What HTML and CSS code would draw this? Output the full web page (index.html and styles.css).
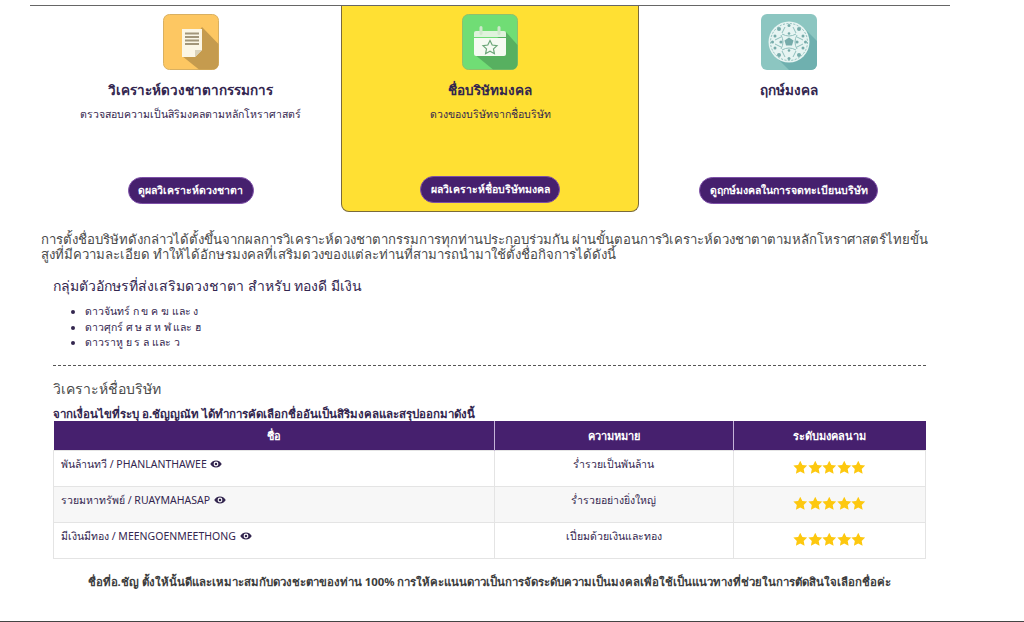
FILE: index.html
```html
<!DOCTYPE html>
<html lang="th">
<head>
    <meta charset="UTF-8">
    <meta name="viewport" content="width=device-width, initial-scale=1.0">
    <title>ชื่อบริษัทมงคล</title>
    <link rel="stylesheet" href="styles.css">
</head>
<body>
    <svg class="defs" width="0" height="0">
        <symbol id="star" viewBox="0 0 24 24">
            <path d="M12 .8l3.500 7 7.900 1-5.700 5.500 1.500 8L12 18.500l-7.200 3.800 1.500-8L.6 8.800l7.900-1z"/>
        </symbol>
        <symbol id="eye" viewBox="0 0 24 16">
            <path fill-rule="evenodd" d="M12 1C6.500 1 2.500 4.500.5 8c2 3.500 6 7 11.500 7s9.500-3.500 11.500-7C21.500 4.500 17.500 1 12 1zm0 2.200a4.800 4.800 0 1 1 0 9.600 4.800 4.800 0 0 1 0-9.600zM12 5.500a2.500 2.500 0 1 0 0 5 2.500 2.500 0 0 0 0-5z"/>
        </symbol>
    </svg>

    <div class="wrap">
        <div class="cards">
            <div class="card">
                <svg class="icon" viewBox="0 0 56 56">
                    <rect x=".5" y=".5" width="55" height="55" rx="6" fill="#fdc762" stroke="#d9b061"/>
                    <path d="M39 13l16.500 17v20a5.500 5.500 0 0 1-5.500 5.500H36L19 42z" fill="#c59b4e"/>
                    <path d="M19 15h20v21l-7 7H19z" fill="#fbf6e6"/>
                    <path d="M32 43v-7h7z" fill="#d9d2bb"/>
                    <path d="M22 19.500h14M22 23h14M22 26.500h14M22 30h14" stroke="#a2967a" stroke-width="2"/>
                </svg>
                <h3>วิเคราะห์ดวงชาตากรรมการ</h3>
                <p>ตรวจสอบความเป็นสิริมงคลตามหลักโหราศาสตร์</p>
                <a href="#" class="btn">ดูผลวิเคราะห์ดวงชาตา</a>
            </div>
            <div class="card active">
                <svg class="icon" viewBox="0 0 56 56">
                    <rect x=".5" y=".5" width="55" height="55" rx="6" fill="#70dd75" stroke="#8fc06c"/>
                    <path d="M44 18l11.500 13v19a5.500 5.500 0 0 1-5.500 5.500H31L12 40z" fill="#57b060"/>
                    <path d="M12 19a2 2 0 0 1 2-2h28a2 2 0 0 1 2 2v4H12z" fill="#dff3dc"/>
                    <path d="M12 24h32v16a2 2 0 0 1-2 2H14a2 2 0 0 1-2-2z" fill="#f5faf2"/>
                    <path d="M19 13.500v6M37 13.500v6" stroke="#cfe8cc" stroke-width="3" stroke-linecap="round"/>
                    <path d="M28 26.500l2.200 4.500 4.800.6-3.500 3.300.9 4.800-4.400-2.400-4.400 2.400.9-4.800-3.500-3.300 4.800-.6z" fill="none" stroke="#6aa577" stroke-width="1.200"/>
                </svg>
                <h3>ชื่อบริษัทมงคล</h3>
                <p>ดวงของบริษัทจากชื่อบริษัท</p>
                <a href="#" class="btn">ผลวิเคราะห์ชื่อบริษัทมงคล</a>
            </div>
            <div class="card">
                <svg class="icon" viewBox="0 0 56 56">
                    <rect width="56" height="56" rx="6" fill="#8cc6c1"/>
                    <path d="M42 13l14 14v23a6 6 0 0 1-6 6H28L14 42z" fill="#6fb0af"/>
                    <circle cx="28" cy="28" r="20.500" fill="#e6f4f2"/>
                    <g fill="#76abaa">
                        <circle cx="28" cy="11.500" r="1.500"/><circle cx="28" cy="44.500" r="1.500"/>
                        <circle cx="11.500" cy="28" r="1.500"/><circle cx="44.500" cy="28" r="1.500"/>
                        <circle cx="18" cy="15" r="2"/><circle cx="38" cy="15" r="2"/>
                        <circle cx="18" cy="41" r="2"/><circle cx="38" cy="41" r="2"/>
                        <circle cx="14" cy="22" r="1.500"/><circle cx="42" cy="22" r="1.500"/>
                        <circle cx="14" cy="34" r="1.500"/><circle cx="42" cy="34" r="1.500"/>
                        <circle cx="20" cy="28" r="1.600"/><circle cx="36" cy="28" r="1.600"/>
                        <circle cx="28" cy="19.500" r="1.300"/><circle cx="28" cy="36.500" r="1.300"/>
                        <path d="M28 23.500l4.500 3-1.500 5h-6l-1.500-5z"/>
                    </g>
                    <g fill="none" stroke="#8fbfbc" stroke-width="1">
                        <circle cx="28" cy="28" r="18.500" stroke-dasharray="2 1.500"/>
                        <path d="M24 13l-3 6M32 13l3 6M14 26l6-3M42 26l-6-3M14 30l6 3M42 30l-6 3M24 43l-3-6M32 43l3-6"/>
                        <path d="M21 20q7 4 14 0M21 36q7-4 14 0M20 21q4 7 0 14M36 21q-4 7 0 14"/>
                    </g>
                </svg>
                <h3>ฤกษ์มงคล</h3>
                <p></p>
                <a href="#" class="btn">ดูฤกษ์มงคลในการจดทะเบียนบริษัท</a>
            </div>
        </div>

        <div class="article">
            <p class="intro">การตั้งชื่อบริษัทดังกล่าวได้ตั้งขึ้นจากผลการวิเคราะห์ดวงชาตากรรมการทุกท่านประกอบร่วมกัน ผ่านขั้นตอนการวิเคราะห์ดวงชาตาตามหลักโหราศาสตร์ไทยขั้นสูงที่มีความละเอียด ทำให้ได้อักษรมงคลที่เสริมดวงของแต่ละท่านที่สามารถนำมาใช้ตั้งชื่อกิจการได้ดังนี้</p>
            <div class="section">
                <h4>กลุ่มตัวอักษรที่ส่งเสริมดวงชาตา สำหรับ ทองดี มีเงิน</h4>
                <ul>
                    <li>ดาวจันทร์ ก ข ค ฆ และ ง</li>
                    <li>ดาวศุกร์ ศ ษ ส ห ฬ และ ฮ</li>
                    <li>ดาวราหู ย ร ล และ ว</li>
                </ul>
                <hr>
                <h4 class="light">วิเคราะห์ชื่อบริษัท</h4>
                <p class="lead">จากเงื่อนไขที่ระบุ อ.ชัญญณัท ได้ทำการคัดเลือกชื่ออันเป็นสิริมงคลและสรุปออกมาดังนี้</p>
                <table>
                    <thead>
                        <tr>
                            <th class="col-name">ชื่อ</th>
                            <th class="col-mean">ความหมาย</th>
                            <th>ระดับมงคลนาม</th>
                        </tr>
                    </thead>
                    <tbody>
                        <tr>
                            <td>พันล้านทวี / PHANLANTHAWEE <svg class="eye"><use href="#eye"/></svg></td>
                            <td class="center">ร่ำรวยเป็นพันล้าน</td>
                            <td class="center"><span class="stars"><svg><use href="#star"/></svg><svg><use href="#star"/></svg><svg><use href="#star"/></svg><svg><use href="#star"/></svg><svg><use href="#star"/></svg></span></td>
                        </tr>
                        <tr>
                            <td>รวยมหาทรัพย์ / RUAYMAHASAP <svg class="eye"><use href="#eye"/></svg></td>
                            <td class="center">ร่ำรวยอย่างยิ่งใหญ่</td>
                            <td class="center"><span class="stars"><svg><use href="#star"/></svg><svg><use href="#star"/></svg><svg><use href="#star"/></svg><svg><use href="#star"/></svg><svg><use href="#star"/></svg></span></td>
                        </tr>
                        <tr>
                            <td>มีเงินมีทอง / MEENGOENMEETHONG <svg class="eye"><use href="#eye"/></svg></td>
                            <td class="center">เปี่ยมด้วยเงินและทอง</td>
                            <td class="center"><span class="stars"><svg><use href="#star"/></svg><svg><use href="#star"/></svg><svg><use href="#star"/></svg><svg><use href="#star"/></svg><svg><use href="#star"/></svg></span></td>
                        </tr>
                    </tbody>
                </table>
                <p class="note">ชื่อที่อ.ชัญ ตั้งให้นั้นดีและเหมาะสมกับดวงชะตาของท่าน 100% การให้คะแนนดาวเป็นการจัดระดับความเป็นมงคลเพื่อใช้เป็นแนวทางที่ช่วยในการตัดสินใจเลือกชื่อค่ะ</p>
            </div>
        </div>
    </div>
    <div class="page-end"></div>
</body>
</html>
```

FILE: styles.css
```css
:root {
    --purple: #46206e;
    --heading: #33264f;
    --text: #444;
}

html, body {
    height: 100%;
}

body {
    font-family: "Noto Sans", "DejaVu Sans", sans-serif;
    color: var(--text);
    background-color: #fff;
    margin: 0;
    padding-top: 5px;
    box-sizing: border-box;
    display: flex;
    flex-direction: column;
    overflow: hidden;
}

.defs {
    position: absolute;
}

.wrap {
    width: 920px;
    margin-left: 30px;
    border-top: 1px solid #666;
    flex: 1;
}

.cards {
    display: flex;
    padding-left: 11px;
}

.card {
    width: 299px;
    height: 206px;
    box-sizing: border-box;
    display: flex;
    flex-direction: column;
    align-items: center;
    padding-top: 8px;
    text-align: center;
}

.card.active {
    width: 298px;
    margin-left: 1px;
    background-color: #ffe033;
    border: 1px solid #7a6a3a;
    border-top: 0;
    border-radius: 0 0 8px 8px;
}

.icon {
    width: 56px;
    height: 56px;
    margin-bottom: 10px;
}

.card h3 {
    font-size: 13.5px;
    line-height: 20px;
    font-weight: 700;
    color: var(--heading);
    margin: 0 0 6px;
}

.card p {
    font-size: 10.5px;
    line-height: 16px;
    color: var(--heading);
    margin: 0;
    flex: 1;
}

.btn {
    display: inline-block;
    background-color: var(--purple);
    border: 1px solid #7d4fa8;
    color: #fff;
    font-size: 10.5px;
    font-weight: 700;
    line-height: 25px;
    padding: 0 9.5px;
    border-radius: 14px;
    text-decoration: none;
    margin-bottom: 8px;
}

.intro {
    font-size: 13.2px;
    line-height: 15px;
    margin: 20px 18px 0 11px;
    color: #4a4a4a;
}

.section {
    margin: 0 24px 0 23px;
}

.section h4 {
    font-size: 14px;
    line-height: 20px;
    font-weight: 400;
    color: var(--heading);
    margin: 14px 0 0;
}

.section ul {
    font-size: 10.5px;
    line-height: 15.5px;
    margin: 8px 0 0;
    padding-left: 32px;
    color: var(--heading);
}

hr {
    border: 0;
    border-top: 1px dashed #555;
    margin: 14.500px 0 0;
}

.section h4.light {
    margin-top: 13px;
    color: #4a4a4a;
}

.lead {
    font-size: 11.500px;
    line-height: 14px;
    font-weight: 700;
    color: var(--heading);
    margin: 8px 0 0;
}

table {
    width: 873px;
    table-layout: fixed;
    border-collapse: collapse;
    font-size: 10.5px;
}

th {
    background-color: var(--purple);
    color: #fff;
    font-size: 11px;
    font-weight: 700;
    height: 29px;
    padding: 0;
    border-left: 1px solid #c5b3d8;
}

th:first-child {
    border-left: 0;
}

.col-name {
    width: 440px;
}

.col-mean {
    width: 238px;
}

td {
    height: 36px;
    padding: 0 7px 8px;
    box-sizing: border-box;
    border: 1px solid #e4e4e4;
    color: var(--heading);
}

tbody tr:nth-child(2) {
    background-color: #f7f7f7;
}

.center {
    text-align: center;
}

.eye {
    width: 12px;
    height: 8px;
    margin-left: 1px;
    fill: var(--heading);
}

.stars {
    display: inline-flex;
    position: relative;
    top: 4px;
}

.stars svg {
    width: 14.500px;
    height: 15px;
    fill: #fdc80f;
}

.note {
    font-size: 11.400px;
    line-height: 16px;
    font-weight: 700;
    color: #3c3c3c;
    text-align: center;
    margin: 15px 0 0;
}

.page-end {
    height: 1px;
    background-color: #444;
}
```
